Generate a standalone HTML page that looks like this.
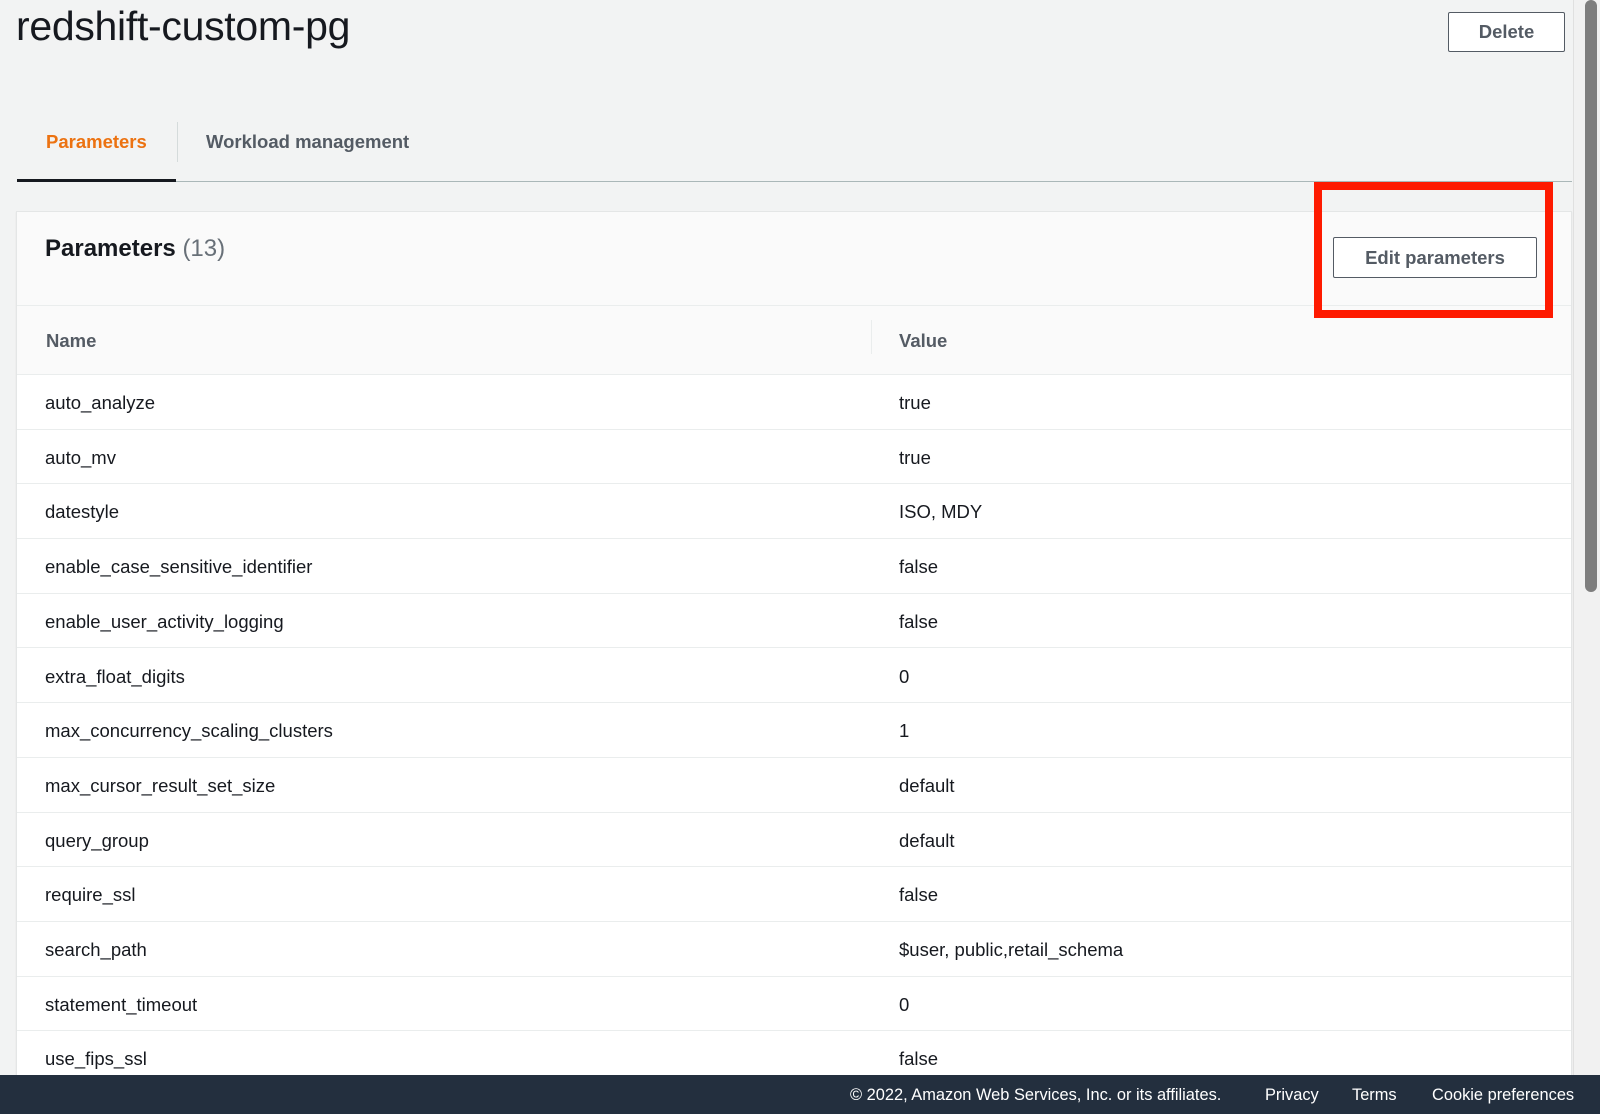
<!DOCTYPE html>
<html><head><meta charset="utf-8"><style>
*{box-sizing:border-box;margin:0;padding:0}
body{width:1600px;height:1114px;overflow:hidden;background:#f2f3f3;font-family:"Liberation Sans",sans-serif;color:#16191f;position:relative}
.abs{position:absolute}
h1{position:absolute;left:16px;top:3px;font-size:41px;font-weight:400;letter-spacing:-0.3px}
.btn{position:absolute;background:#fff;border:1px solid #545b64;border-radius:2px;color:#545b64;font-weight:700;font-size:18.5px;display:flex;align-items:center;justify-content:center}
.tab{position:absolute;font-weight:700;font-size:18.5px;top:131px}
.card{position:absolute;left:16px;top:211px;width:1556px;height:900px;background:#fff;border:1px solid #e4e6e6;box-shadow:0 1px 1px rgba(0,0,0,.1)}
.hdr{position:absolute;left:0;top:0;width:100%;height:94px;background:#fafafa;border-bottom:1px solid #eaeded}
.th{position:absolute;left:0;top:94px;width:100%;height:69px;background:#fafafa;border-bottom:1px solid #eaeded;font-weight:700;color:#545b64;font-size:18.5px}
.row{position:absolute;left:0;width:100%;height:54.7px;border-bottom:1px solid #eaeded;font-size:18.5px}
.row span{position:absolute;top:17px}
.foot{position:absolute;left:0;top:1075px;width:1600px;height:39px;background:#232f3e;color:#fff;font-size:16.4px}
.foot span{position:absolute;top:11px}
</style></head><body>
<h1>redshift-custom-pg</h1>
<div class="btn" style="left:1448px;top:12px;width:117px;height:40px">Delete</div>
<div class="tab" style="left:46px;color:#ec7211">Parameters</div>
<div class="abs" style="left:177px;top:122px;width:1px;height:40px;background:#d5dbdb"></div>
<div class="tab" style="left:206px;color:#545b64">Workload management</div>
<div class="abs" style="left:17px;top:181px;width:1555px;height:1px;background:#aab7b8"></div>
<div class="abs" style="left:17px;top:179px;width:159px;height:3px;background:#16191f"></div>
<div class="card">
 <div class="hdr"><div class="abs" style="left:28px;top:23px;font-size:24px;font-weight:700">Parameters <span style="font-weight:400;color:#687078">(13)</span></div></div>
 <div class="th"><span class="abs" style="left:29px;top:24px">Name</span><div class="abs" style="left:854px;top:14px;width:1px;height:34px;background:#eaeded"></div><span class="abs" style="left:882px;top:24px">Value</span></div>
 <div class="abs" style="left:0;top:163px;width:100%">
  <div class="row" style="top:0"><span style="left:28px">auto_analyze</span><span style="left:882px">true</span></div>
  <div class="row" style="top:54.7px"><span style="left:28px">auto_mv</span><span style="left:882px">true</span></div>
  <div class="row" style="top:109.4px"><span style="left:28px">datestyle</span><span style="left:882px">ISO, MDY</span></div>
  <div class="row" style="top:164.1px"><span style="left:28px">enable_case_sensitive_identifier</span><span style="left:882px">false</span></div>
  <div class="row" style="top:218.8px"><span style="left:28px">enable_user_activity_logging</span><span style="left:882px">false</span></div>
  <div class="row" style="top:273.5px"><span style="left:28px">extra_float_digits</span><span style="left:882px">0</span></div>
  <div class="row" style="top:328.2px"><span style="left:28px">max_concurrency_scaling_clusters</span><span style="left:882px">1</span></div>
  <div class="row" style="top:382.9px"><span style="left:28px">max_cursor_result_set_size</span><span style="left:882px">default</span></div>
  <div class="row" style="top:437.6px"><span style="left:28px">query_group</span><span style="left:882px">default</span></div>
  <div class="row" style="top:492.3px"><span style="left:28px">require_ssl</span><span style="left:882px">false</span></div>
  <div class="row" style="top:547px"><span style="left:28px">search_path</span><span style="left:882px">$user, public,retail_schema</span></div>
  <div class="row" style="top:601.7px"><span style="left:28px">statement_timeout</span><span style="left:882px">0</span></div>
  <div class="row" style="top:656.4px"><span style="left:28px">use_fips_ssl</span><span style="left:882px">false</span></div>
 </div>
</div>
<div class="btn" style="left:1333px;top:237px;width:204px;height:41px">Edit parameters</div>
<div class="abs" style="left:1314px;top:182px;width:239px;height:136px;border:8px solid #fe1a00"></div>
<div class="abs" style="left:1573px;top:0;width:27px;height:1075px;background:#f1f1f1;border-left:1px solid #e0e0e0"></div>
<div class="abs" style="left:1585px;top:0;width:12px;height:592px;background:#7e7e7e;border-radius:6px"></div>
<div class="foot"><span style="left:850px">© 2022, Amazon Web Services, Inc. or its affiliates.</span><span style="left:1265px">Privacy</span><span style="left:1352px">Terms</span><span style="left:1432px">Cookie preferences</span></div>
</body></html>
